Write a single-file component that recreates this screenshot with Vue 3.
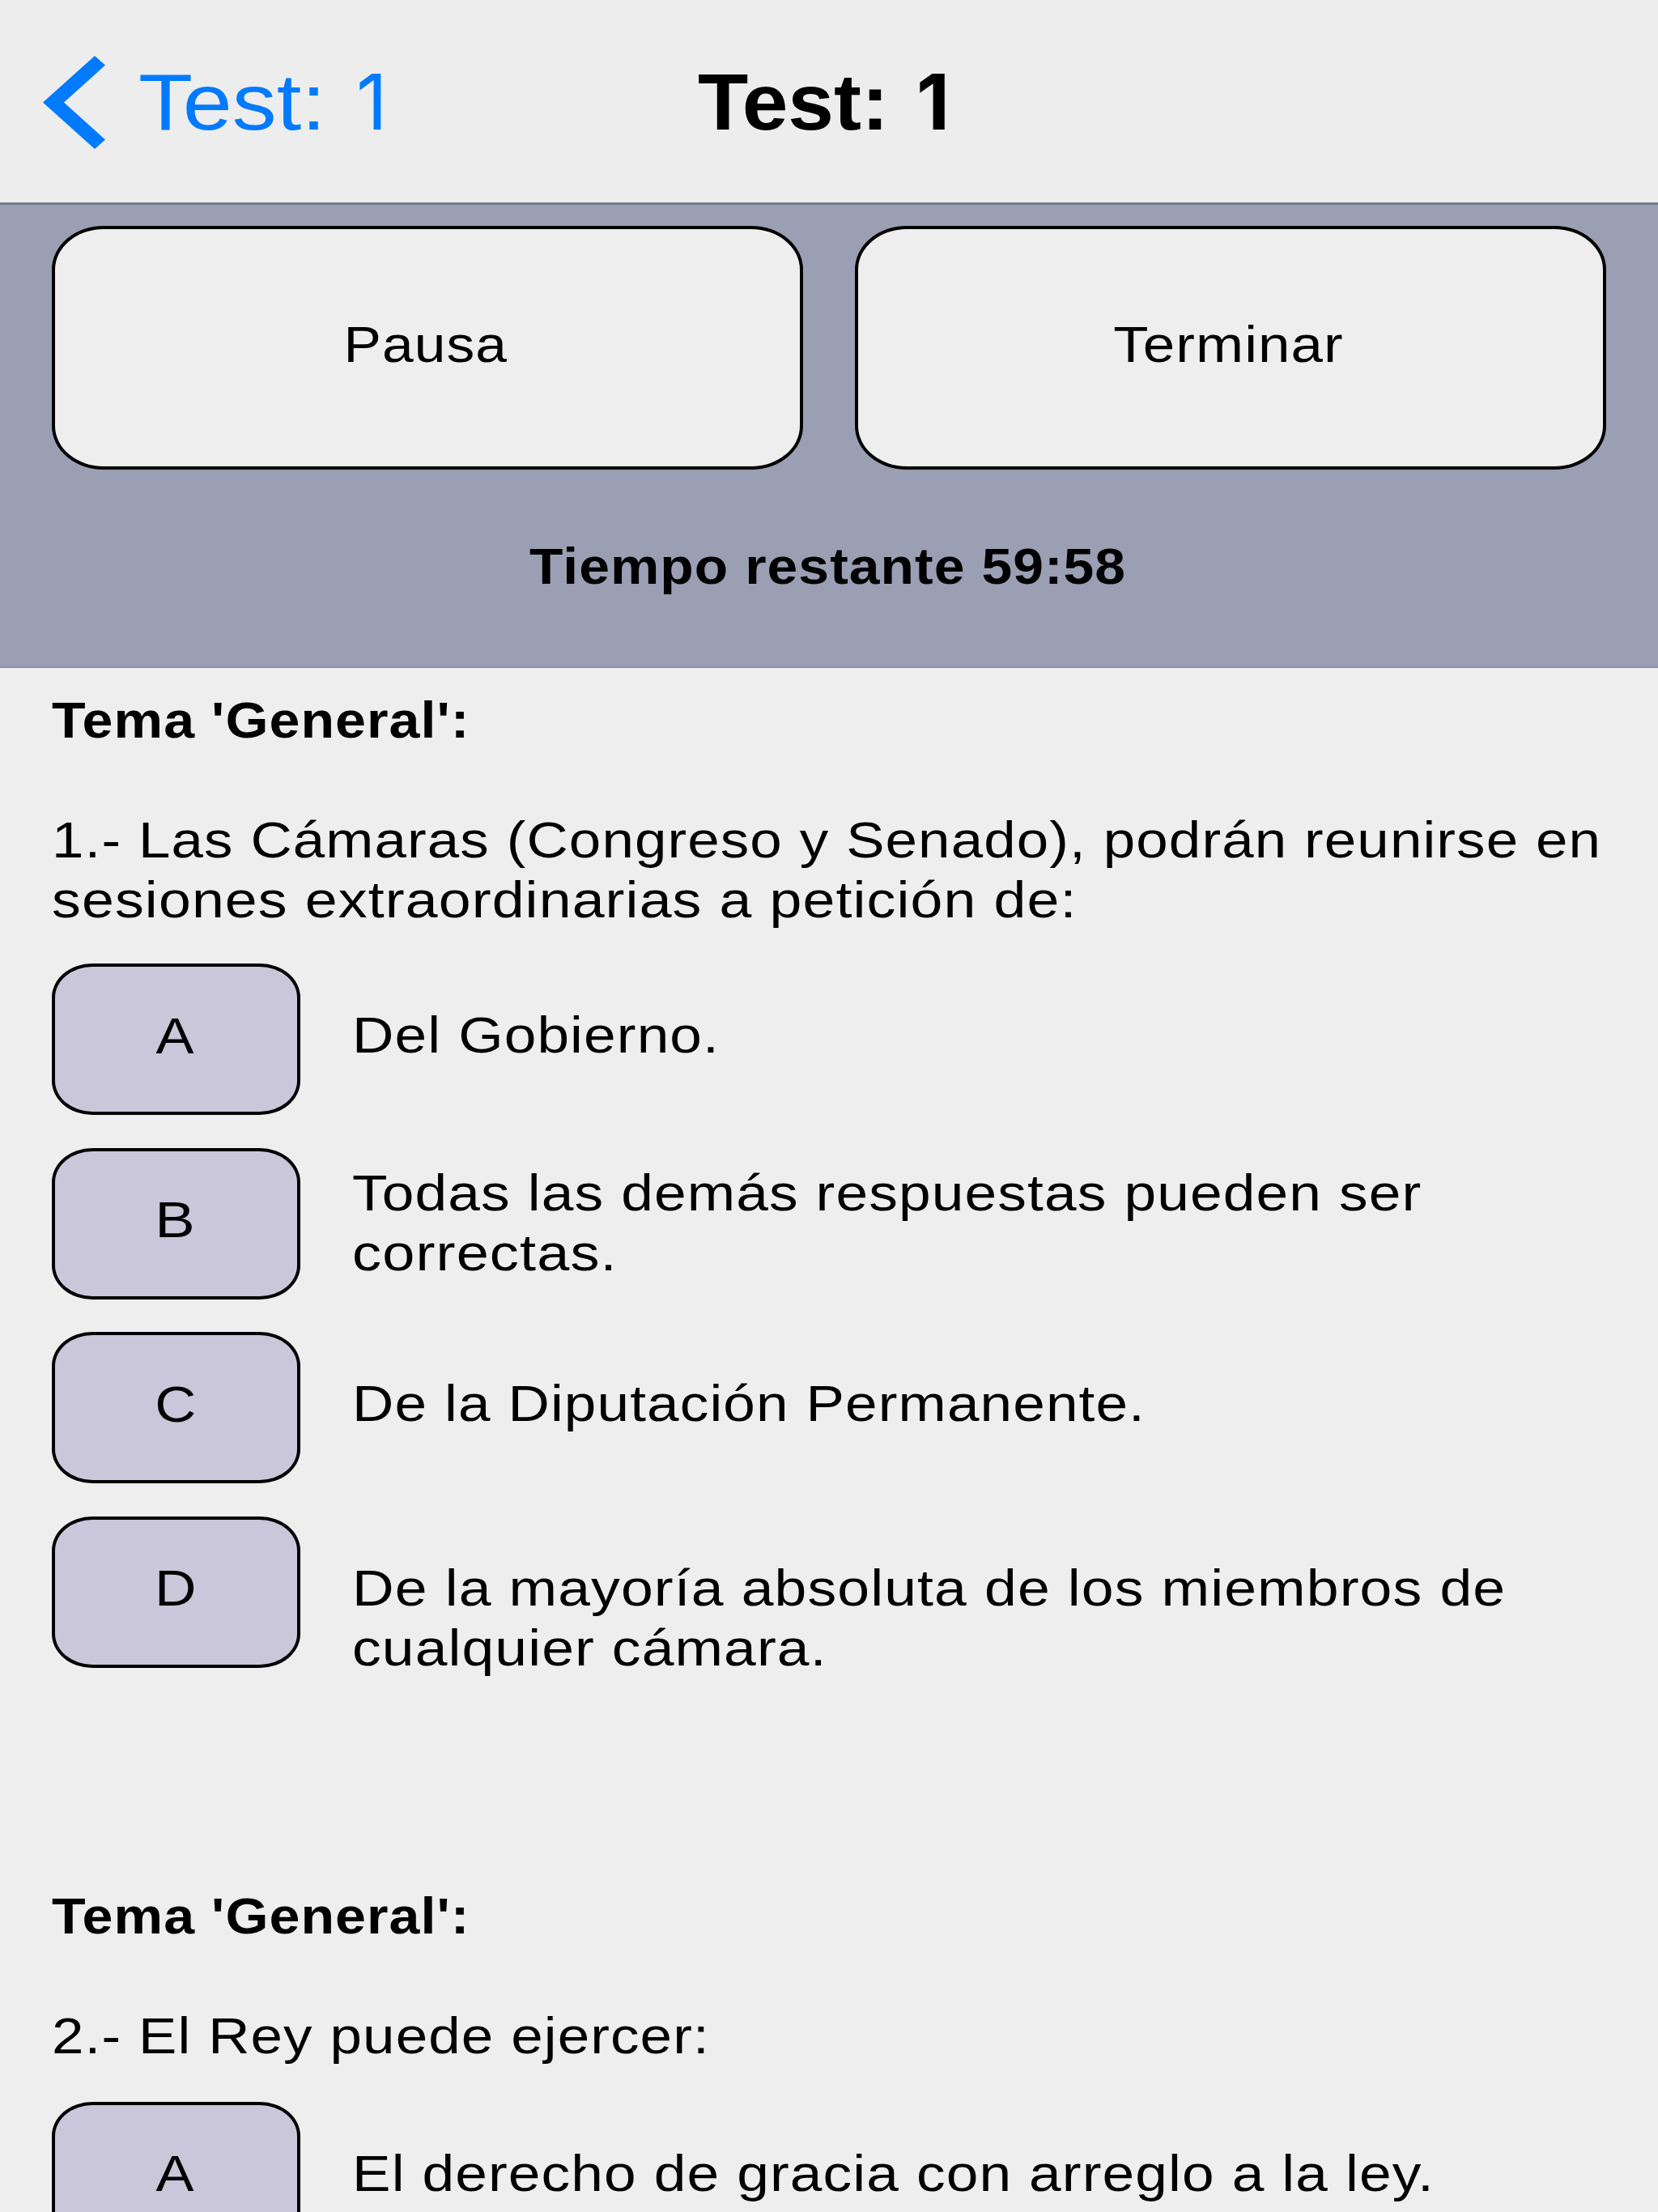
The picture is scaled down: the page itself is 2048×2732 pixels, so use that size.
<template>
  <div class="screen">
    <header class="navbar">
      <a class="back">
        <svg class="chevron" viewBox="0 0 77 115" width="77" height="115">
          <path d="M0 57.5 64 0 77 11.5 26 57.5 77 103.5 64 115Z" fill="#007aff" />
        </svg>
        <span class="label">
          <span class="wide" :style="stretch('Test:', 220, 99)">Test:</span>
          <span class="digit">1</span>
        </span>
      </a>
      <h1 class="title label">
        <span class="wide" :style="stretch('Test:', 226, 97.5, true)">Test:</span>
        <span class="digit">1</span>
      </h1>
    </header>

    <section class="panel">
      <div class="actions">
        <button v-for="a in actions" :key="a.text" class="action">
          <span class="wide" :style="stretch(a.text, a.width)">{{ a.text }}</span>
        </button>
      </div>
      <div class="timer">
        <span class="wide" :style="stretch(timer.text, timer.width, 63, true)">{{ timer.text }}</span>
      </div>
    </section>

    <main class="questions">
      <article v-for="q in questions" :key="q.id" class="question">
        <h2 class="topic">
          <span class="wide" :style="stretch(topic.text, topic.width, 63, true)">{{ topic.text }}</span>
        </h2>
        <div class="statement">
          <div v-for="l in q.lines" :key="l.text" class="line">
            <span class="wide" :style="stretch(l.text, l.width)">{{ l.text }}</span>
          </div>
        </div>
        <div class="answers">
          <div v-for="a in q.answers" :key="a.letter" class="answer">
            <button class="letter">
              <span class="wide" :style="stretch(a.letter, a.width)">{{ a.letter }}</span>
            </button>
            <div class="answer-text" :class="{ raised: a.raised }">
              <div v-for="l in a.lines" :key="l.text" class="line">
                <span class="wide" :style="stretch(l.text, l.width)">{{ l.text }}</span>
              </div>
            </div>
          </div>
        </div>
      </article>
    </main>
  </div>
</template>

<script setup>
const actions = [
  { text: "Pausa", width: 197 },
  { text: "Terminar", width: 281 },
];

const timer = { text: "Tiempo restante 59:58", width: 735 };
const topic = { text: "Tema 'General':", width: 509 };

const questions = [
  {
    id: 1,
    lines: [
      { text: "1.- Las Cámaras (Congreso y Senado), podrán reunirse en", width: 1904 },
      { text: "sesiones extraordinarias a petición de:", width: 1258 },
    ],
    answers: [
      { letter: "A", width: 47, lines: [{ text: "Del Gobierno.", width: 441 }] },
      {
        letter: "B",
        width: 40,
        raised: true,
        lines: [
          { text: "Todas las demás respuestas pueden ser", width: 1318 },
          { text: "correctas.", width: 318 },
        ],
      },
      { letter: "C", width: 46, lines: [{ text: "De la Diputación Permanente.", width: 967 }] },
      {
        letter: "D",
        width: 43,
        lines: [
          { text: "De la mayoría absoluta de los miembros de", width: 1416 },
          { text: "cualquier cámara.", width: 577 },
        ],
      },
    ],
  },
  {
    id: 2,
    lines: [{ text: "2.- El Rey puede ejercer:", width: 802 }],
    answers: [
      { letter: "A", width: 47, lines: [{ text: "El derecho de gracia con arreglo a la ley.", width: 1324 }] },
    ],
  },
];

const ctx = document.createElement("canvas").getContext("2d");

// widens a line of text horizontally until its glyphs span `width`
function stretch(text, width, size = 63, bold = false) {
  ctx.font = `${bold ? "bold " : ""}${size}px "Liberation Sans"`;
  ctx.letterSpacing = size === 63 ? "1px" : "0px";
  const m = ctx.measureText(text);
  const ink = m.actualBoundingBoxRight + m.actualBoundingBoxLeft;
  return { transform: `scaleX(${(width / ink).toFixed(4)})` };
}
</script>

<style scoped>
.screen {
  width: 2048px;
  height: 2732px;
  overflow: hidden;
  background-color: #eeeeee;
  color: #000;
  font-family: "Liberation Sans", Arial, sans-serif;
  font-size: 63px;
  line-height: 74px;
  letter-spacing: 1px;
}

.wide {
  display: inline-block;
  white-space: pre;
  transform-origin: left center;
}

.navbar {
  display: grid;
  grid-template-columns: 1fr auto 1fr;
  box-sizing: border-box;
  height: 253px;
  padding-top: 70px;
  border-bottom: 3px solid #727a8a;
  background-color: #ededed;
  letter-spacing: 0;
  line-height: 110px;
}

.back {
  display: flex;
  align-items: center;
  gap: 41px;
  height: 112px;
  padding-left: 53px;
  color: #007aff;
  font-size: 99px;
}

.chevron {
  flex: none;
}

.label {
  display: flex;
  align-items: baseline;
  gap: 60px;
}

.digit {
  font-family: Inter, sans-serif;
  font-size: 95px;
}

.title {
  gap: 44px;
  margin: 1px 13px 0 0;
  font-size: 97.5px;
  font-weight: bold;
}

.action .wide,
.letter .wide,
.timer .wide {
  transform-origin: center;
}

.panel {
  box-sizing: border-box;
  height: 572px;
  padding: 26px 64px 0;
  border-bottom: 2px solid #8690a6;
  background-color: #9a9fb3;
}

.actions {
  display: flex;
  gap: 64px;
}

button {
  display: flex;
  align-items: center;
  justify-content: center;
  box-sizing: border-box;
  margin: 0;
  padding: 0 4px 10px 0;
  border: 4px solid #000;
  color: #000;
  font: inherit;
  letter-spacing: inherit;
}

.action {
  flex: 1;
  height: 301px;
  border-radius: 64px / 54px;
  background-color: #eeeeee;
}

.timer {
  margin-top: 82px;
  padding-right: 2px;
  text-align: center;
  font-weight: bold;
}

.questions {
  padding: 27px 64px 0;
}

.topic {
  margin: 0 0 74px;
  font-size: inherit;
  font-weight: bold;
}

.line,
.topic {
  height: 74px;
}

.answers {
  display: flex;
  flex-direction: column;
  gap: 40.5px;
  margin-top: 42px;
}

.question + .question {
  margin-top: 269px;
}

.question + .question .answers {
  margin-top: 45px;
}

.answer {
  display: flex;
  gap: 64px;
  height: 187px;
}

.letter {
  flex: none;
  width: 307px;
  height: 187px;
  padding-right: 1px;
  border-radius: 50px / 42px;
  background-color: #c9c7d9;
}

.answer-text {
  padding-top: 51px;
}

.answer-text.raised {
  padding-top: 18px;
}
</style>

<style>
body {
  margin: 0;
  background-color: #eeeeee;
}
</style>
